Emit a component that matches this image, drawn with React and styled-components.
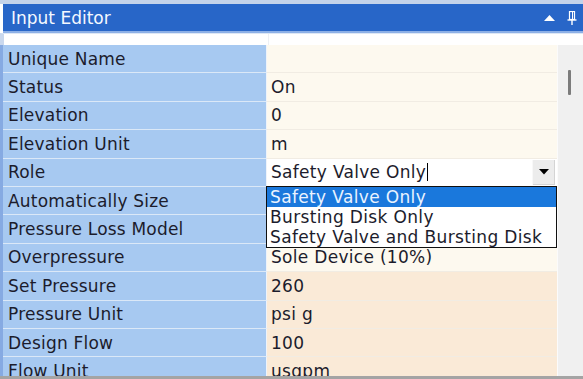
import * as React from 'react';
import styled, { createGlobalStyle } from 'styled-components';

const GlobalStyle = createGlobalStyle`
  html, body {
    margin: 0;
    padding: 0;
    background: #ffffff;
  }
  body {
    font-family: 'DejaVu Sans', Verdana, sans-serif;
  }
`;

const Panel = styled.div`
  width: 583px;
  height: 379px;
  box-sizing: border-box;
  display: flex;
  flex-direction: column;
  overflow: hidden;
  border-top: 4px solid #c4d3ea;
  border-bottom: 3px solid #a4a4a4;
  background: #ffffff;
`;

const TitleBar = styled.div`
  height: 27px;
  flex: none;
  display: flex;
  align-items: center;
  margin-left: 3px;
  padding: 0 6px 0 8px;
  background: #2866c8;
  border-bottom: 2px solid #8db0e6;
  color: #f4f8ff;
  font-size: 17px;
`;

const Title = styled.span`
  flex: 1;
  padding-top: 1px;
`;

const TitleIcons = styled.div`
  display: flex;
  align-items: center;
  gap: 12px;
`;

const HeaderStrip = styled.div`
  height: 11px;
  flex: none;
  display: grid;
  grid-template-columns: 264px 1fr;
  border-top: 1px solid #dde7f5;
  border-left: 4px solid #c9d8ee;
  background: #ffffff;

  & > div + div {
    border-left: 1px solid #eef0f4;
  }
`;

const Body = styled.div`
  flex: 1;
  min-height: 0;
  display: flex;
`;

const Rows = styled.div`
  flex: 1;
  min-width: 0;
  border-left: 3px solid #86aae2;
  box-shadow: inset 1px 0 0 #c4d6f2;
`;

const Row = styled.div`
  display: grid;
  grid-template-columns: 264px 1fr;
  height: 28.4px;
  box-sizing: border-box;
`;

const Label = styled.div`
  display: flex;
  align-items: center;
  padding-left: 5px;
  background: #a7c9f1;
  border-bottom: 1px solid #dbe8f7;
  border-right: 1px solid #eef3fa;
  color: #1c1c2c;
  font-size: 17px;
  letter-spacing: 0.2px;
  white-space: nowrap;
`;

const Value = styled.div`
  position: relative;
  display: flex;
  align-items: center;
  padding-left: 4px;
  background: ${p => (p.$tone === 'peach' ? '#faead7' : '#fdf9ef')};
  border-bottom: 1px solid #f1ece3;
  color: #1c1c2c;
  font-size: 17px;
  letter-spacing: 0.3px;
  white-space: nowrap;
`;

const EditBox = styled.div`
  position: absolute;
  inset: 0 0 0 0;
  display: flex;
  align-items: center;
  padding-left: 4px;
  background: #ffffff;
`;

const EditText = styled.span`
  flex: 1;
  display: flex;
  align-items: center;
`;

const Caret = styled.span`
  display: inline-block;
  width: 1px;
  height: 18px;
  margin-left: 1px;
  background: #000000;
`;

const DropButton = styled.div`
  width: 22px;
  height: 25px;
  margin-right: 2px;
  display: flex;
  align-items: center;
  justify-content: center;
  background: #ececec;
  border-left: 1px solid #f8f8f8;
  box-shadow: inset -1px -1px 0 #d4d4d4;
`;

const DropList = styled.div`
  position: absolute;
  top: 100%;
  left: -1px;
  right: 0;
  z-index: 2;
  box-sizing: border-box;
  border: 1px solid #101010;
  background: #ffffff;
`;

const Option = styled.div`
  height: 20px;
  line-height: 20px;
  padding-left: 3px;
  font-size: 17px;
  letter-spacing: 0.35px;
  background: ${p => (p.$selected ? '#1a78dc' : '#ffffff')};
  color: ${p => (p.$selected ? '#eaf3ff' : '#1c1c2c')};
`;

const Scrollbar = styled.div`
  width: 25px;
  flex: none;
  position: relative;
  background: #f0f0f0;
  border-left: 1px solid #fbfbfb;
`;

const Thumb = styled.div`
  position: absolute;
  left: 10px;
  top: 25px;
  width: 3px;
  height: 25px;
  border-radius: 1px;
  background: #7c7c7c;
`;

const rows = [
  { label: 'Unique Name', value: '' },
  { label: 'Status', value: 'On' },
  { label: 'Elevation', value: '0' },
  { label: 'Elevation Unit', value: 'm' },
  { label: 'Role', value: 'Safety Valve Only', editing: true },
  { label: 'Automatically Size', value: '' },
  { label: 'Pressure Loss Model', value: '' },
  { label: 'Overpressure', value: 'Sole Device (10%)' },
  { label: 'Set Pressure', value: '260', tone: 'peach' },
  { label: 'Pressure Unit', value: 'psi g', tone: 'peach' },
  { label: 'Design Flow', value: '100', tone: 'peach' },
  { label: 'Flow Unit', value: 'usgpm', tone: 'peach' }
];

const options = ['Safety Valve Only', 'Bursting Disk Only', 'Safety Valve and Bursting Disk'];

const PinIcon = () => (
  <svg width="10" height="14" viewBox="0 0 10 14">
    <rect x="2.5" y="0.5" width="5" height="8" fill="none" stroke="#ffffff" strokeWidth="1.2" />
    <line x1="5.5" y1="1" x2="5.5" y2="8" stroke="#ffffff" strokeWidth="1" />
    <line x1="0.5" y1="9" x2="9.5" y2="9" stroke="#ffffff" strokeWidth="1.4" />
    <line x1="5" y1="9" x2="5" y2="14" stroke="#ffffff" strokeWidth="1.4" />
  </svg>
);

const UpIcon = () => (
  <svg width="11" height="6" viewBox="0 0 11 6">
    <polygon points="0,6 11,6 5.5,0" fill="#ffffff" />
  </svg>
);

const DownArrow = () => (
  <svg width="10" height="6" viewBox="0 0 10 6">
    <polygon points="0,0 10,0 5,5.5" fill="#000000" />
  </svg>
);

export default function App() {
  return (
    <>
      <GlobalStyle />
      <Panel>
        <TitleBar>
          <Title>Input Editor</Title>
          <TitleIcons>
            <UpIcon />
            <PinIcon />
          </TitleIcons>
        </TitleBar>
        <HeaderStrip>
          <div />
          <div />
        </HeaderStrip>
        <Body>
          <Rows>
            {rows.map(r => (
              <Row key={r.label}>
                <Label>{r.label}</Label>
                <Value $tone={r.tone}>
                  {r.editing ? (
                    <>
                      <EditBox>
                        <EditText>
                          {r.value}
                          <Caret />
                        </EditText>
                        <DropButton>
                          <DownArrow />
                        </DropButton>
                      </EditBox>
                      <DropList>
                        {options.map((o, i) => (
                          <Option key={o} $selected={i === 0}>
                            {o}
                          </Option>
                        ))}
                      </DropList>
                    </>
                  ) : (
                    r.value
                  )}
                </Value>
              </Row>
            ))}
          </Rows>
          <Scrollbar>
            <Thumb />
          </Scrollbar>
        </Body>
      </Panel>
    </>
  );
}
